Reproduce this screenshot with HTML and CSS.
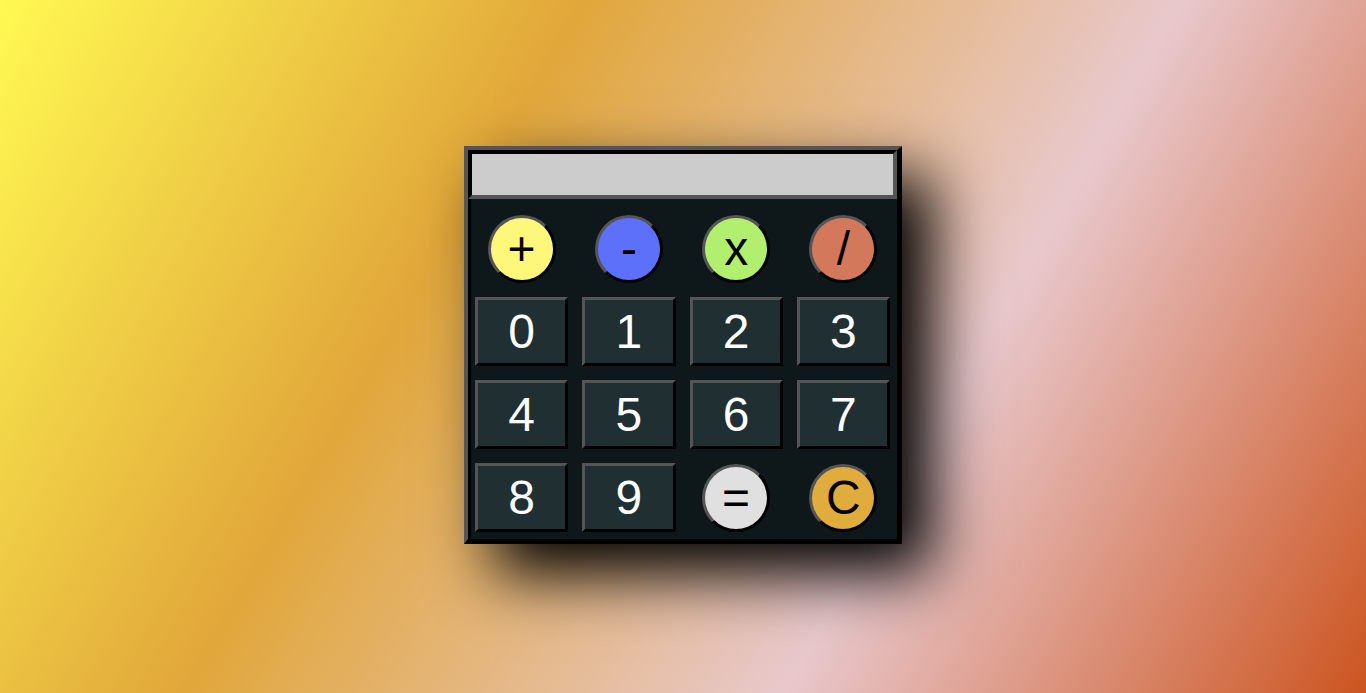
FILE: index.html
```html
<!DOCTYPE html>
<html lang="en">
<head>
<meta charset="utf-8">
<title>Calculator</title>
<link rel="stylesheet" href="styles.css">
</head>
<body>
  <div class="calc">
    <div class="display"></div>
    <div class="keys">
      <button class="op op-add">+</button>
      <button class="op op-sub">-</button>
      <button class="op op-mul">x</button>
      <button class="op op-div">/</button>
      <button class="num">0</button>
      <button class="num">1</button>
      <button class="num">2</button>
      <button class="num">3</button>
      <button class="num">4</button>
      <button class="num">5</button>
      <button class="num">6</button>
      <button class="num">7</button>
      <button class="num">8</button>
      <button class="num">9</button>
      <button class="op op-eq">=</button>
      <button class="op op-clr">C</button>
    </div>
  </div>
</body>
</html>
```

FILE: styles.css
```css
* { box-sizing: border-box; }

html, body {
  margin: 0;
  height: 100%;
}

body {
  display: flex;
  align-items: center;
  justify-content: center;
  background: linear-gradient(120deg, #fff952 0%, #e1a73a 33%, #e8c8cc 67%, #cc5520 100%);
  font-family: "Liberation Sans", Arial, sans-serif;
  overflow: hidden;
}

.calc {
  width: 438px;
  margin-bottom: 3px;
  background: #0e171a;
  border-style: solid;
  border-width: 4px 5px 5px 4px;
  border-color: #555 #000 #000 #555;
  box-shadow: inset 3px 0 0 #000, 30px 30px 60px rgba(0, 0, 0, 1);
}

.display {
  height: 49px;
  background: #cccccc;
  border-style: solid;
  border-width: 4px;
  border-color: #000 #555 #555 #000;
}

.keys {
  display: grid;
  grid-template-columns: repeat(4, 1fr);
  grid-auto-rows: 69px;
  column-gap: 14px;
  row-gap: 14px;
  padding: 15px 7px 7px;
}

button {
  font-family: inherit;
  font-size: 48px;
  line-height: 1;
  padding: 0;
  margin: 0;
  display: flex;
  align-items: center;
  justify-content: center;
  border-style: solid;
  border-width: 3px;
  border-color: #555 #000 #000 #555;
  cursor: pointer;
}

.num {
  background: #1f2f32;
  color: #ffffff;
}

.op {
  width: 68px;
  height: 68px;
  border-radius: 50%;
  justify-self: center;
  align-self: center;
  color: #000;
}

.op-add { background: #fdf77a; }
.op-sub { background: #5c70fa; }
.op-mul { background: #b3ef6e; }
.op-div { background: #d4785c; }
.op-eq  { background: #e0e0e0; }
.op-clr { background: #e0ac3c; }
```
